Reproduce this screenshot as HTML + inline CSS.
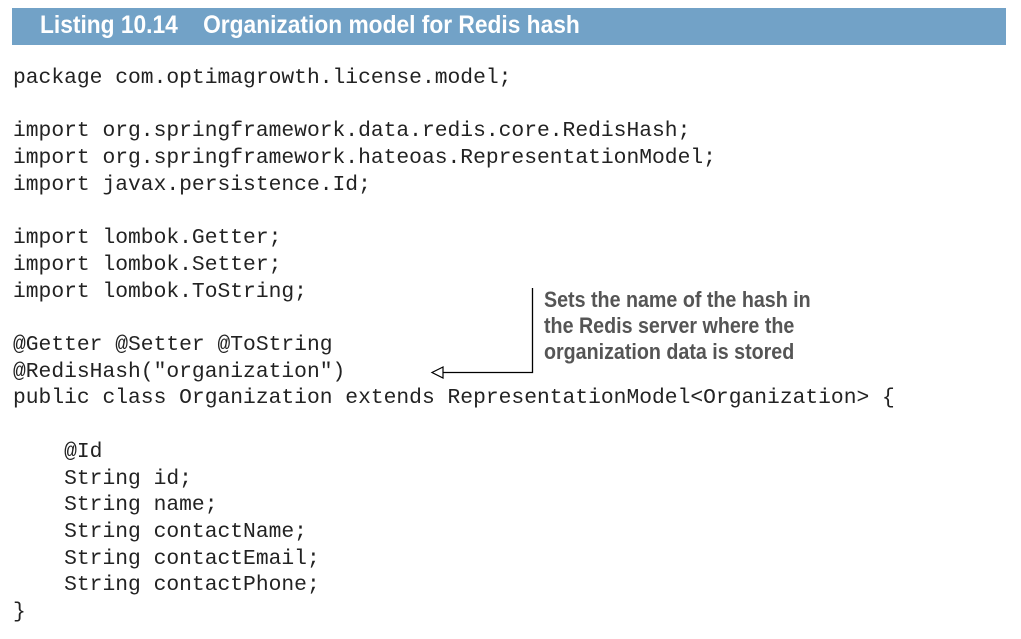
<!DOCTYPE html>
<html><head><meta charset="utf-8"><style>
body{margin:0;background:#fff;width:1021px;height:639px;position:relative;overflow:hidden}
.bar{position:absolute;left:12px;top:8px;width:994px;height:37px;background:#72a2c7}
.bar span{position:absolute;left:28px;top:3px;color:#fff;font:bold 25px "Liberation Sans",sans-serif;white-space:pre;transform:scaleX(0.91);transform-origin:0 0}
pre{position:absolute;left:13px;top:65px;margin:0;font:21.3px/26.7px "Liberation Mono",monospace;color:#222}
.note{position:absolute;left:544px;top:287px;font:bold 22px/26px "Liberation Sans",sans-serif;color:#555;transform:scaleX(0.894);transform-origin:0 0;white-space:nowrap}
</style></head><body>
<div class="bar"><span>Listing 10.14    Organization model for Redis hash</span></div>
<pre>package com.optimagrowth.license.model;

import org.springframework.data.redis.core.RedisHash;
import org.springframework.hateoas.RepresentationModel;
import javax.persistence.Id;

import lombok.Getter;
import lombok.Setter;
import lombok.ToString;

@Getter @Setter @ToString
@RedisHash("organization")
public class Organization extends RepresentationModel&lt;Organization&gt; {

    @Id
    String id;
    String name;
    String contactName;
    String contactEmail;
    String contactPhone;
}</pre>
<div class="note">Sets the name of the hash in<br>the Redis server where the<br>organization data is stored</div>
<svg style="position:absolute;left:0;top:0" width="1021" height="639">
<path d="M532.5 288V372.5H443" fill="none" stroke="#000" stroke-width="1.3"/>
<path d="M443 367L432 372.5L443 378Z" fill="#fff" stroke="#000" stroke-width="1.2"/>
</svg>
</body></html>
